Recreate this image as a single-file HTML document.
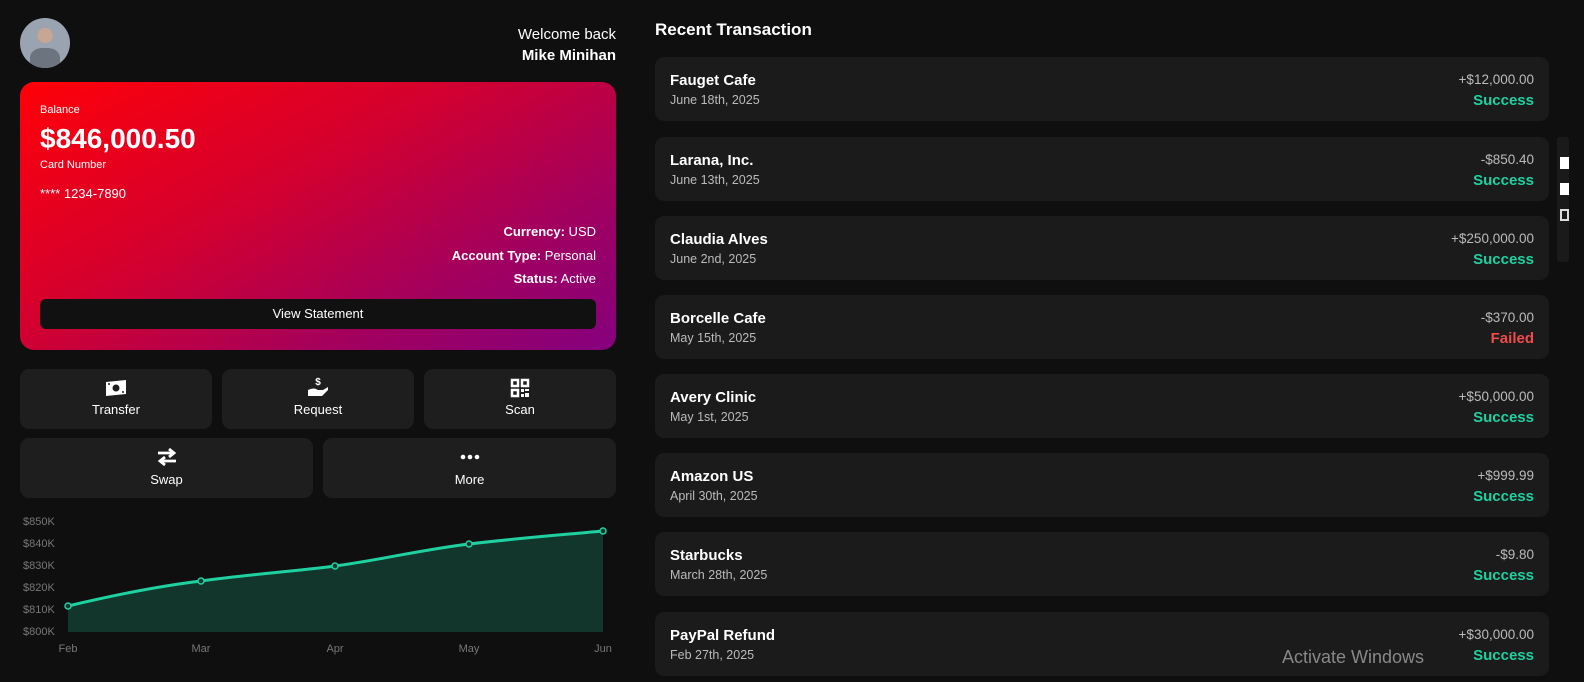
<!DOCTYPE html>
<html><head><meta charset="utf-8"><style>
*{margin:0;padding:0;box-sizing:border-box}
body{width:1584px;height:682px;background:#0f0f0f;font-family:"Liberation Sans",sans-serif;color:#fff;position:relative;overflow:hidden}
.abs{position:absolute}
.card{left:20px;top:82px;width:596px;height:268px;border-radius:14px;background:linear-gradient(150deg,#ff0008 0%,#d4002e 40%,#a00060 75%,#85007e 100%)}
.btn{background:#1e1e1e;border-radius:9px;position:absolute;text-align:center;font-size:13px}
.btn svg{display:block;margin:0 auto}
.tx{position:absolute;left:655px;width:894px;height:64px;background:#1b1b1b;border-radius:9px}
.tx .n{position:absolute;left:15px;top:15px;font-weight:bold;font-size:15px}
.tx .d{position:absolute;left:15px;top:36px;font-size:12.5px;color:#bbb}
.tx .a{position:absolute;right:15px;top:15px;font-size:13.5px;color:#bbb}
.tx .s{position:absolute;right:15px;top:35px;font-weight:bold;font-size:15px;color:#1fd1a0}
.tx .s.f{color:#ef4b4b}
.yl{position:absolute;left:23px;font-size:11px;color:#777}
.xl{position:absolute;top:643px;font-size:11px;color:#777;transform:translateX(-50%)}
</style></head><body>
<div class="abs" style="left:20px;top:18px;width:50px;height:50px;border-radius:50%;background:radial-gradient(circle at 50% 35%,#c9a593 0 18%,#9aa3b0 19% 100%);overflow:hidden"><div style="position:absolute;left:10px;top:30px;width:30px;height:25px;background:#6c7480;border-radius:40% 40% 0 0"></div></div>
<div class="abs" style="right:968px;top:24px;text-align:right;font-size:15px;line-height:21px">Welcome back<br><b>Mike Minihan</b></div>
<div class="abs card">
<div class="abs" style="left:20px;top:22px;font-size:11px">Balance</div>
<div class="abs" style="left:20px;top:41px;font-size:28px;font-weight:bold">$846,000.50</div>
<div class="abs" style="left:20px;top:77px;font-size:11px">Card Number</div>
<div class="abs" style="left:20px;top:104px;font-size:13px">**** 1234-7890</div>
<div class="abs" style="right:20px;top:138px;text-align:right;font-size:13px;line-height:23.5px"><b>Currency:</b> USD<br><b>Account Type:</b> Personal<br><b>Status:</b> Active</div>
<div class="abs" style="left:20px;top:217px;width:556px;height:30px;background:#111;border-radius:6px;text-align:center;line-height:30px;font-size:13px">View Statement</div>
</div>
<div class="btn" style="left:20px;top:369px;width:192px;height:60px"><svg width="24" height="20" viewBox="0 0 24 20" style="margin-top:9px"><path d="M2 4 L22 2 L22 16 L2 18Z" fill="#fff"/><circle cx="12" cy="10" r="3.5" fill="#1e1e1e"/><circle cx="5" cy="6" r="1" fill="#1e1e1e"/><circle cx="19" cy="14" r="1" fill="#1e1e1e"/></svg><div style="margin-top:4px">Transfer</div></div>
<div class="btn" style="left:222px;top:369px;width:192px;height:60px"><svg width="24" height="22" viewBox="0 0 24 22" style="margin-top:7px"><text x="12" y="9" font-size="10" font-weight="bold" fill="#fff" text-anchor="middle" font-family="Liberation Sans">$</text><path d="M2 14 Q8 11 12 14 L17 14 L22 11 L22 14 L16 20 L2 20Z" fill="#fff"/></svg><div style="margin-top:4px">Request</div></div>
<div class="btn" style="left:424px;top:369px;width:192px;height:60px"><svg width="20" height="20" viewBox="0 0 20 20" style="margin-top:9px"><g fill="none" stroke="#fff" stroke-width="2.5"><rect x="2" y="2" width="6" height="6"/><rect x="12" y="2" width="6" height="6"/><rect x="2" y="12" width="6" height="6"/></g><path d="M11 11h3v3h-3zM15 15h4v4h-4zM15 11h4v2h-4zM11 16h3v3h-3z" fill="#fff"/></svg><div style="margin-top:4px">Scan</div></div>
<div class="btn" style="left:20px;top:438px;width:293px;height:60px"><svg width="22" height="22" viewBox="0 0 22 22" style="margin-top:8px"><path d="M2 7 H17 M13 3 L18 7 L13 11 M20 15 H5 M9 11 L4 15 L9 19" fill="none" stroke="#fff" stroke-width="2.8"/></svg><div style="margin-top:4px">Swap</div></div>
<div class="btn" style="left:323px;top:438px;width:293px;height:60px"><svg width="22" height="22" viewBox="0 0 22 22" style="margin-top:8px"><circle cx="4" cy="11" r="2.3" fill="#fff"/><circle cx="11" cy="11" r="2.3" fill="#fff"/><circle cx="18" cy="11" r="2.3" fill="#fff"/></svg><div style="margin-top:4px">More</div></div>
<div class="yl" style="top:516px">$850K</div><div class="yl" style="top:538px">$840K</div><div class="yl" style="top:560px">$830K</div><div class="yl" style="top:582px">$820K</div><div class="yl" style="top:604px">$810K</div><div class="yl" style="top:626px">$800K</div>
<div class="xl" style="left:68px">Feb</div><div class="xl" style="left:201px">Mar</div><div class="xl" style="left:335px">Apr</div><div class="xl" style="left:469px">May</div><div class="xl" style="left:603px">Jun</div>
<svg class="abs" style="left:0;top:0" width="640" height="682"><path d="M68 606 C110 596 160 586 201 581 C250 574 290 572 335 566 C380 560 420 550 469 544 C520 538 560 535 603 531 L603 632 L68 632Z" fill="#12362b"/><path d="M68 606 C110 596 160 586 201 581 C250 574 290 572 335 566 C380 560 420 550 469 544 C520 538 560 535 603 531" fill="none" stroke="#1fd1a0" stroke-width="3"/><g fill="#12362b" stroke="#1fd1a0" stroke-width="1.5"><circle cx="68" cy="606" r="3"/><circle cx="201" cy="581" r="3"/><circle cx="335" cy="566" r="3"/><circle cx="469" cy="544" r="3"/><circle cx="603" cy="531" r="3"/></g></svg>
<div class="abs" style="left:655px;top:20px;font-size:17px;font-weight:bold">Recent Transaction</div>
<div class="tx" style="top:57px"><div class="n">Fauget Cafe</div><div class="d">June 18th, 2025</div><div class="a">+$12,000.00</div><div class="s">Success</div></div>
<div class="tx" style="top:137px"><div class="n">Larana, Inc.</div><div class="d">June 13th, 2025</div><div class="a">-$850.40</div><div class="s">Success</div></div>
<div class="tx" style="top:216px"><div class="n">Claudia Alves</div><div class="d">June 2nd, 2025</div><div class="a">+$250,000.00</div><div class="s">Success</div></div>
<div class="tx" style="top:295px"><div class="n">Borcelle Cafe</div><div class="d">May 15th, 2025</div><div class="a">-$370.00</div><div class="s f">Failed</div></div>
<div class="tx" style="top:374px"><div class="n">Avery Clinic</div><div class="d">May 1st, 2025</div><div class="a">+$50,000.00</div><div class="s">Success</div></div>
<div class="tx" style="top:453px"><div class="n">Amazon US</div><div class="d">April 30th, 2025</div><div class="a">+$999.99</div><div class="s">Success</div></div>
<div class="tx" style="top:532px"><div class="n">Starbucks</div><div class="d">March 28th, 2025</div><div class="a">-$9.80</div><div class="s">Success</div></div>
<div class="tx" style="top:612px"><div class="n">PayPal Refund</div><div class="d">Feb 27th, 2025</div><div class="a">+$30,000.00</div><div class="s">Success</div></div>
<div class="abs" style="left:1557px;top:137px;width:12px;height:125px;background:#1a1a1a;border-radius:3px"><div style="margin:20px 0 0 3px;width:9px;height:12px;background:#fff"></div><div style="margin:14px 0 0 3px;width:9px;height:12px;background:#fff"></div><div style="margin:14px 0 0 3px;width:9px;height:12px;border:2px solid #ddd"></div></div>
<div class="abs" style="left:1282px;top:647px;font-size:18px;color:#888">Activate Windows</div>
</body></html>
